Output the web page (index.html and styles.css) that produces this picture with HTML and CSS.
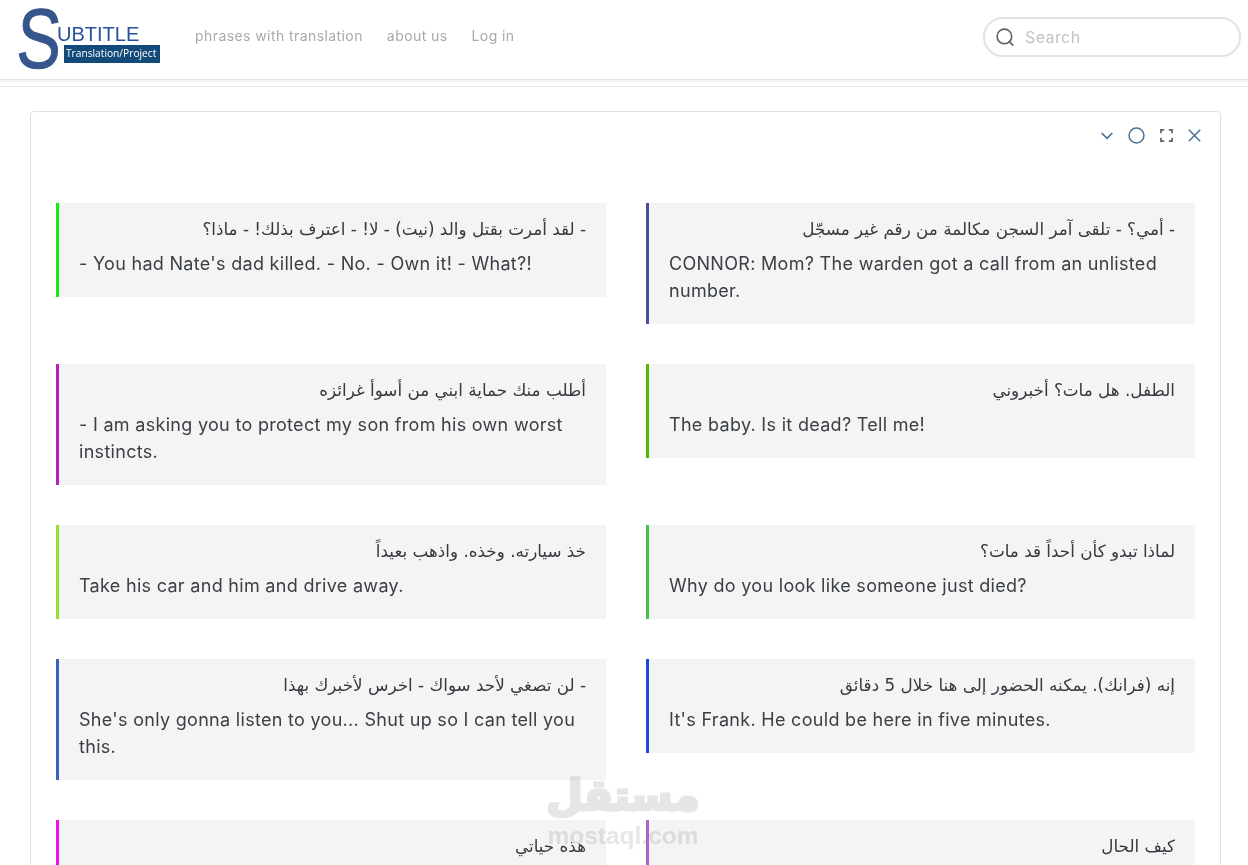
FILE: index.html
```html
<!DOCTYPE html>
<html lang="en">
<head>
<meta charset="utf-8">
<title>Subtitle</title>
<link rel="stylesheet" href="styles.css">
</head>
<body>
<header class="topbar">
  <a class="logo" href="#">
    <span class="logo-s">S</span>
    <span class="logo-text">
      <span class="logo-word">UBTITLE</span>
      <span class="logo-tag">Translation/Project</span>
    </span>
  </a>
  <nav class="nav">
    <a href="#">phrases with translation</a>
    <a href="#">about us</a>
    <a href="#">Log in</a>
  </nav>
  <label class="search">
    <svg class="search-icon" viewBox="0 0 20 20" width="20" height="20" fill="none" stroke="#5f6570" stroke-width="1.7"><circle cx="9.4" cy="9.4" r="7.3"/><path d="M14.6 14.8l3.2 3.3" stroke-linecap="round"/></svg>
    <span class="search-ph">Search</span>
  </label>
</header>
<div class="rule"></div>
<main class="card">
  <div class="card-tools">
    <div class="tools-row">
      <svg viewBox="0 0 12 8" width="12" height="8" fill="none" stroke="#4a7096" stroke-width="1.7"><path d="M.7 1L6 6.4 11.3 1"/></svg>
      <svg viewBox="0 0 18 18" width="17" height="17" fill="none" stroke="#4a7096" stroke-width="1.6"><circle cx="9" cy="9" r="7.9"/></svg>
      <svg viewBox="0 0 14 14" width="13" height="13" fill="none" stroke="#5a6670" stroke-width="1.8"><path d="M1 4.5V1h3.5M9.5 1H13v3.5M13 9.5V13H9.5M4.5 13H1V9.5"/></svg>
      <svg viewBox="0 0 13 13" width="13" height="13" fill="none" stroke="#4a7096" stroke-width="1.5"><path d="M.8.8l11.4 11.4M12.2.8L.8 12.2"/></svg>
    </div>
  </div>
  <div class="phrases">
    <article class="phrase c-lime"><p class="ar" dir="rtl">- لقد أمرت بقتل والد (نيت) - لا! - اعترف بذلك! - ماذا؟</p><p class="en">- You had Nate's dad killed. - No. - Own it! - What?!</p></article>
    <article class="phrase c-indigo"><p class="ar" dir="rtl">- أمي؟ - تلقى آمر السجن مكالمة من رقم غير مسجّل</p><p class="en">CONNOR: Mom? The warden got a call from an unlisted number.</p></article>
    <article class="phrase c-magenta"><p class="ar" dir="rtl">أطلب منك حماية ابني من أسوأ غرائزه</p><p class="en">- I am asking you to protect my son from his own worst instincts.</p></article>
    <article class="phrase c-green"><p class="ar" dir="rtl">الطفل. هل مات؟ أخبروني</p><p class="en">The baby. Is it dead? Tell me!</p></article>
    <article class="phrase c-yellowgreen"><p class="ar" dir="rtl">خذ سيارته. وخذه. واذهب بعيداً</p><p class="en">Take his car and him and drive away.</p></article>
    <article class="phrase c-emerald"><p class="ar" dir="rtl">لماذا تبدو كأن أحداً قد مات؟</p><p class="en">Why do you look like someone just died?</p></article>
    <article class="phrase c-steel"><p class="ar" dir="rtl">- لن تصغي لأحد سواك - اخرس لأخبرك بهذا</p><p class="en">She's only gonna listen to you... Shut up so I can tell you this.</p></article>
    <article class="phrase c-blue"><p class="ar" dir="rtl">إنه (فرانك). يمكنه الحضور إلى هنا خلال 5 دقائق</p><p class="en">It's Frank. He could be here in five minutes.</p></article>
    <article class="phrase c-fuchsia"><p class="ar" dir="rtl">هذه حياتي</p></article>
    <article class="phrase c-purple"><p class="ar" dir="rtl">كيف الحال</p></article>
  </div>
</main>
<div class="watermark" aria-hidden="true">
  <span class="wm-ar" dir="rtl">مستقل</span>
  <span class="wm-en">mostaql.com</span>
</div>
</body>
</html>
```
FILE: styles.css
```css
* { box-sizing: border-box; }
html, body { height: 865px; overflow: hidden; }
body {
  margin: 0;
  background: #fff;
  color: #343a40;
  font-family: "Inter", "Noto Sans", sans-serif;
}
.topbar {
  height: 80px;
  display: flex;
  align-items: center;
  background: #fff;
  border-bottom: 1px solid #e2e2e2;
  box-shadow: 0 1px 3px rgba(0,0,0,.08);
  padding: 0 7px 8px 17px;
}
.logo {
  display: flex;
  flex: none;
  width: 143px;
  height: 62px;
  margin-top: 7px;
  text-decoration: none;
}
.logo-s {
  font: 400 85px/62px "Liberation Sans", sans-serif;
  color: #36558c;
  width: 40px;
  flex: none;
  transform: scaleX(.78) skewX(-4deg);
  transform-origin: left center;
  -webkit-text-stroke: 1px #36558c;
}
.logo-text {
  display: flex;
  flex-direction: column;
  padding-top: 15px;
}
.logo-word {
  font: 400 20px/22px "Liberation Sans", sans-serif;
  color: #28509c;
}
.logo-tag {
  width: 96px;
  height: 18px;
  margin: 0 0 0 7px;
  background: #134a7a;
  color: #fff;
  font: 400 10.2px/17px "Open Sans", sans-serif;
  padding-left: 2px;
  white-space: nowrap;
  overflow: hidden;
}
.nav {
  display: flex;
  gap: 24px;
  margin-left: 35px;
}
.nav a {
  color: #a6a9ae;
  font-size: 14px;
  letter-spacing: .42px;
  text-decoration: none;
}
.search {
  margin-left: auto;
  margin-top: 2px;
  width: 258px;
  height: 40px;
  border: 2px solid #e0e3e6;
  border-radius: 20px;
  display: flex;
  align-items: center;
  gap: 10px;
  padding-left: 10px;
}
.search-ph { color: #c0c3c8; font-size: 16px; letter-spacing: .4px; }
.rule { height: 1px; margin-top: 6px; background: #e4e4e4; }
.card {
  margin: 24px 27px 0 30px;
  border: 1px solid #dfdfdf;
  border-radius: 4px;
  padding: 0 25px;
  height: 900px;
}
.card-tools {
  height: 91px;
  display: flex;
  justify-content: flex-end;
  align-items: flex-start;
  padding: 15px 0 0;
  margin-right: -6px;
}
.tools-row {
  display: flex;
  align-items: center;
  gap: 15px;
}
.phrases {
  display: grid;
  grid-template-columns: 550px 549px;
  column-gap: 40px;
  row-gap: 40px;
  align-items: start;
}
.phrase {
  background: #f4f4f4;
  border-left: 3px solid;
  padding: 13px 20px 20px 20px;
}
.ar {
  margin: 0;
  font: 400 16.8px/27px "DejaVu Sans", sans-serif;
  color: #343a40;
}
.en {
  margin: 7px 0 0;
  font-size: 18px;
  letter-spacing: .3px;
  line-height: 27px;
  color: #3b4046;
}
.c-lime { border-color: #12ee12; }
.c-indigo { border-color: #474ea0; }
.c-magenta { border-color: #b91fb8; }
.c-green { border-color: #55b800; }
.c-yellowgreen { border-color: #97dc38; }
.c-emerald { border-color: #42c24c; }
.c-steel { border-color: #3a62b8; }
.c-blue { border-color: #1c48dc; }
.c-fuchsia { border-color: #f012e8; }
.c-purple { border-color: #b060cc; }
.watermark {
  position: absolute;
  left: 538px;
  top: 768px;
  width: 170px;
  display: flex;
  flex-direction: column;
  align-items: center;
  color: #e6e6e6;
  mix-blend-mode: multiply;
  pointer-events: none;
}
.wm-ar { font: 700 42px/56px "DejaVu Sans", sans-serif; -webkit-text-stroke: 3px #e6e6e6; }
.wm-en { font: 700 24.5px/24px "Liberation Sans", sans-serif; }
```
